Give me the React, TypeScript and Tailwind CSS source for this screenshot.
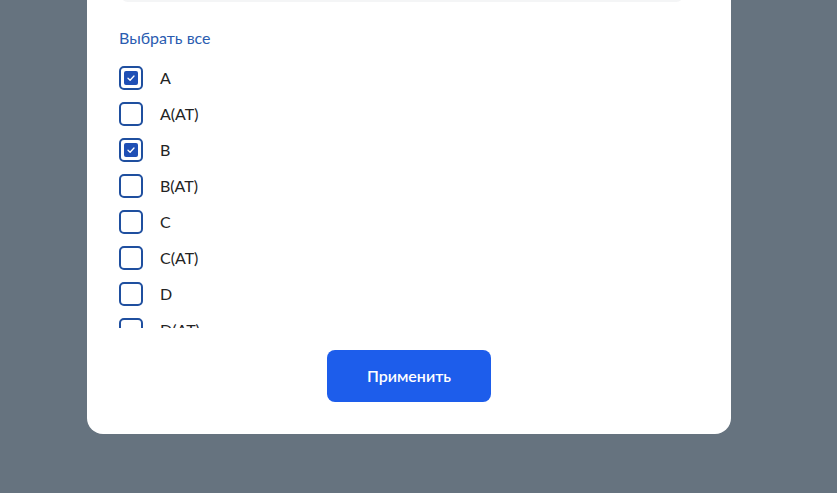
import React from "react";

const items: { label: string; checked: boolean }[] = [
  { label: "A", checked: true },
  { label: "A(AT)", checked: false },
  { label: "B", checked: true },
  { label: "B(AT)", checked: false },
  { label: "C", checked: false },
  { label: "C(AT)", checked: false },
  { label: "D", checked: false },
  { label: "D(AT)", checked: false },
  { label: "E", checked: false },
];

function Box({ checked }: { checked: boolean }) {
  return (
    <div className="w-[24px] h-[24px] shrink-0 rounded-[5px] border-2 border-[#1f4f9f] flex items-center justify-center">
      {checked && (
        <div className="w-[14px] h-[14px] rounded-[2px] bg-[#1f4fb5] flex items-center justify-center">
          <svg width="10" height="10" viewBox="0 0 10 10" fill="none">
            <path d="M2 5.2 L4.1 7.2 L8 3" stroke="white" strokeWidth="1.3" strokeLinecap="round" strokeLinejoin="round" />
          </svg>
        </div>
      )}
    </div>
  );
}

export default function App() {
  return (
    <div
      className="w-[837px] h-[493px] bg-[#66737f] overflow-hidden flex flex-col justify-end pb-[59px] pl-[87px]"
      style={{ fontFamily: "Lato, 'Noto Sans', sans-serif" }}
    >
      <div className="w-[644px] bg-white rounded-[16px] px-[32px] pb-[32px] shrink-0">
        <div className="w-[564px] h-[40px] ml-[1px] bg-[#f4f5f6] rounded-b-[8px]" />
        <div className="mt-[26px] text-[16px] leading-[20px] text-[#2a5cb0]">Выбрать все</div>
        <div className="mt-[12px] h-[268px] overflow-hidden flex flex-col">
          {items.map((it) => (
            <div key={it.label} className="h-[36px] shrink-0 flex items-center">
              <Box checked={it.checked} />
              <span className="ml-[17px] text-[16px] leading-[20px] text-[#232323]">{it.label}</span>
            </div>
          ))}
        </div>
        <div className="mt-[22px] flex justify-center">
          <button className="w-[164px] h-[52px] rounded-[8px] bg-[#1d5deb] text-white text-[16px] font-semibold">
            Применить
          </button>
        </div>
      </div>
    </div>
  );
}
